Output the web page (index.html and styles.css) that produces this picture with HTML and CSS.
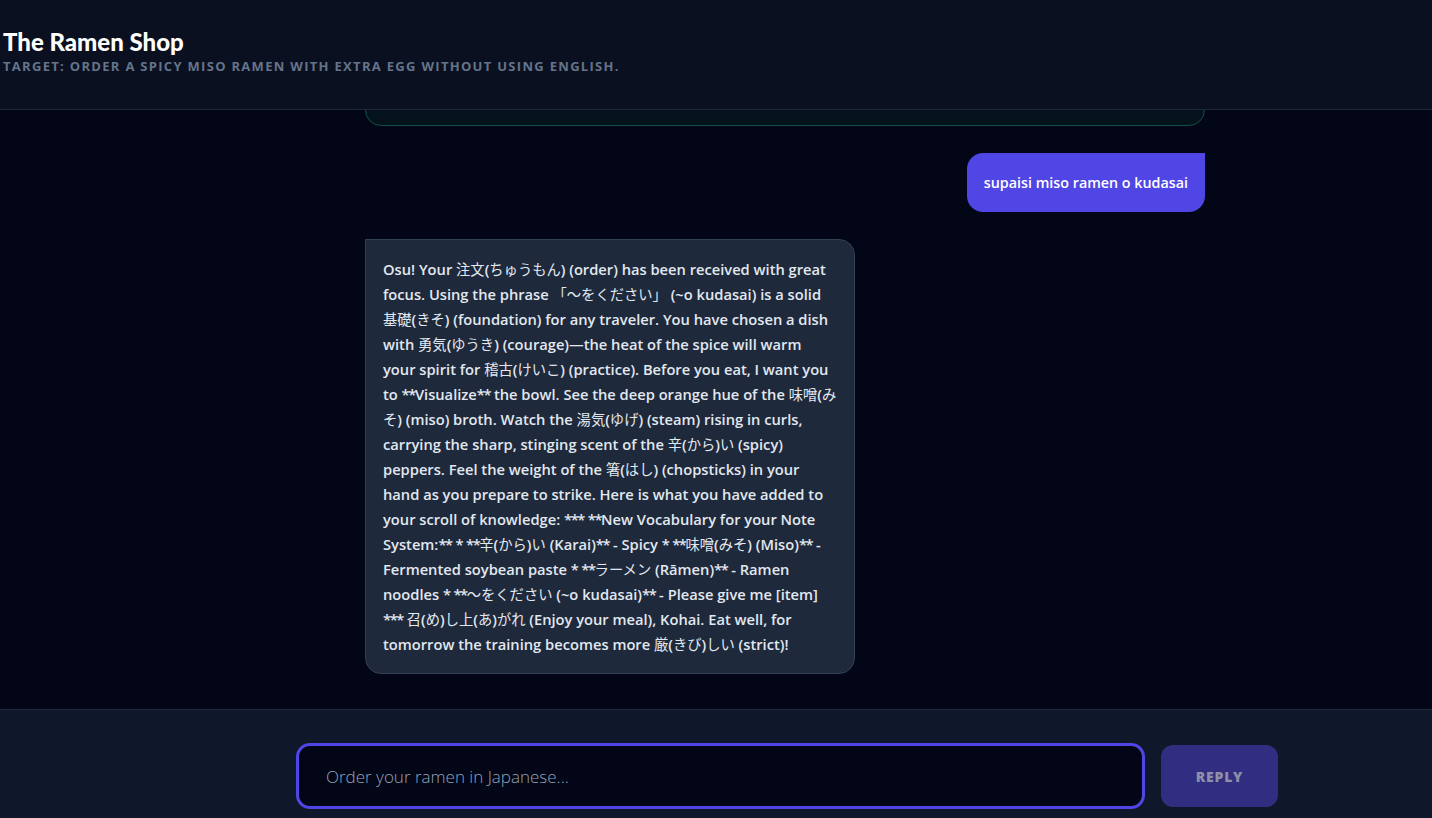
FILE: index.html
```html
<!DOCTYPE html>
<html lang="en">
<head>
<meta charset="utf-8">
<title>The Ramen Shop</title>
<link rel="stylesheet" href="styles.css">
</head>
<body>
<div class="app">
  <header class="topbar">
    <h1 class="title">The Ramen Shop</h1>
    <p class="target">Target: Order a spicy miso ramen with extra egg without using English.</p>
  </header>
  <main class="chat">
    <div class="thread">
      <div class="msg msg-system">
        <p>いらっしゃいませ！ Welcome to the shop, traveler. Today's training begins at the counter. Tell the master what you wish to eat, but remember: only Japanese may be spoken here.</p>
      </div>
      <div class="msg msg-user">supaisi miso ramen o kudasai</div>
      <div class="msg msg-bot">Osu! Your <span class="jp">注文</span>(<span class="jp">ちゅうもん</span>) (order) has been received with great focus. Using the phrase <span class="jp">「～をください」</span> (~o kudasai) is a solid <span class="jp">基礎</span>(<span class="jp">きそ</span>) (foundation) for any traveler. You have chosen a dish with <span class="jp">勇気</span>(<span class="jp">ゆうき</span>) (courage)—the heat of the spice will warm your spirit for <span class="jp">稽古</span>(<span class="jp">けいこ</span>) (practice). Before you eat, I want you to <span class="mk">**</span>Visualize<span class="mk">**</span> the bowl. See the deep orange hue of the <span class="jp">味噌</span>(<span class="jp">みそ</span>) (miso) broth. Watch the <span class="jp">湯気</span>(<span class="jp">ゆげ</span>) (steam) rising in curls, carrying the sharp, stinging scent of the <span class="jp">辛</span>(<span class="jp">から</span>)<span class="jp">い</span> (spicy) peppers. Feel the weight of the <span class="jp">箸</span>(<span class="jp">はし</span>) (chopsticks) in your hand as you prepare to strike. Here is what you have added to your scroll of knowledge: <span class="mk">***</span> <span class="mk">**</span>New Vocabulary for your Note System:<span class="mk">**</span> <span class="mk">*</span> <span class="mk">**</span><span class="jp">辛</span>(<span class="jp">から</span>)<span class="jp">い</span> (Karai)<span class="mk">**</span> - Spicy <span class="mk">*</span> <span class="mk">**</span><span class="jp">味噌</span>(<span class="jp">みそ</span>) (Miso)<span class="mk">**</span> - Fermented soybean paste <span class="mk">*</span> <span class="mk">**</span><span class="jp">ラーメン</span> (Rāmen)<span class="mk">**</span> - Ramen noodles <span class="mk">*</span> <span class="mk">**</span><span class="jp">～をください</span> (~o kudasai)<span class="mk">**</span> - Please give me [item] <span class="mk">***</span> <span class="jp">召</span>(<span class="jp">め</span>)<span class="jp">し上</span>(<span class="jp">あ</span>)<span class="jp">がれ</span> (Enjoy your meal), Kohai. Eat well, for tomorrow the training becomes more <span class="jp">厳</span>(<span class="jp">きび</span>)<span class="jp">しい</span> (strict)!</div>
    </div>
  </main>
  <footer class="composer">
    <div class="composer-row">
      <input class="field" type="text" placeholder="Order your ramen in Japanese..." autofocus>
      <button class="send" type="button">Reply</button>
    </div>
  </footer>
</div>
</body>
</html>
```

FILE: styles.css
```css
* { box-sizing: border-box; }
html, body { margin: 0; padding: 0; height: 100%; }
body {
  background: #020617;
  color: #e2e8f0;
  font-family: "Open Sans", "Noto Sans CJK JP", sans-serif;
  overflow: hidden;
}
.app {
  display: flex;
  flex-direction: column;
  height: 100vh;
}
.topbar {
  flex: 0 0 110px;
  background: #0b1020;
  border-bottom: 1px solid #1e293b;
  padding: 27px 3px 0;
}
.title {
  margin: 0;
  font-family: "Lato", sans-serif;
  font-weight: 900;
  font-size: 24px;
  line-height: 30px;
  color: #ffffff;
}
.target {
  margin: 0;
  font-family: "Open Sans", sans-serif;
  font-weight: 700;
  font-size: 13px;
  line-height: 18px;
  text-transform: uppercase;
  letter-spacing: 1.3px;
  color: #64748b;
}
.chat {
  flex: 1 1 auto;
  min-height: 0;
  overflow: hidden;
  display: flex;
  flex-direction: column;
  justify-content: flex-end;
  padding: 0 227px 35px 365px;
}
.thread {
  display: flex;
  flex-direction: column;
  gap: 27px;
}
.msg {
  border-radius: 16px;
}
.msg-system {
  background: #04131b;
  border: 1px solid #134e4a;
  padding: 18px 18px 24px;
  color: #cbd5e1;
  font-size: 14px;
  line-height: 25px;
}
.msg-system p { margin: 0; }
.msg-user {
  align-self: flex-end;
  background: #4f46e5;
  color: #ffffff;
  border-top-right-radius: 0;
  padding: 20px 17px;
  font-weight: 600;
  font-size: 14.3px;
  line-height: 19px;
}
.msg-bot {
  align-self: flex-start;
  width: 490px;
  background: #1e293b;
  border: 1px solid #334155;
  border-top-left-radius: 0;
  padding: 17px 17px 16px;
  font-weight: 600;
  font-size: 14.7px;
  line-height: 25px;
  color: #e2e8f0;
}
.mk {
  letter-spacing: -1.4px;
}
.jp {
  font-family: "Noto Sans CJK JP", sans-serif;
  font-weight: 400;
  font-size: 14.3px;
  line-height: 1;
}
.composer {
  flex: 0 0 109px;
  background: #0f172a;
  border-top: 1px solid #1e293b;
  padding-top: 33px;
}
.composer-row {
  display: flex;
  align-items: center;
  gap: 16px;
  margin-left: 296px;
  width: 982px;
}
.field {
  flex: 1 1 auto;
  height: 66px;
  background: #020617;
  border: 3px solid #4f46e5;
  border-radius: 14px;
  padding: 0 0 0 27px;
  font-family: "Open Sans", sans-serif;
  font-size: 17px;
  color: #e2e8f0;
  outline: none;
  caret-color: #ffffff;
}
.field::placeholder {
  color: #94a3b8;
  font-weight: 300;
}
.send {
  flex: 0 0 117px;
  height: 62px;
  background: #312e81;
  border: none;
  border-radius: 12px;
  color: #8e8fa9;
  font-family: "Open Sans", sans-serif;
  font-weight: 800;
  font-size: 14px;
  letter-spacing: 0.8px;
  text-transform: uppercase;
}
```
